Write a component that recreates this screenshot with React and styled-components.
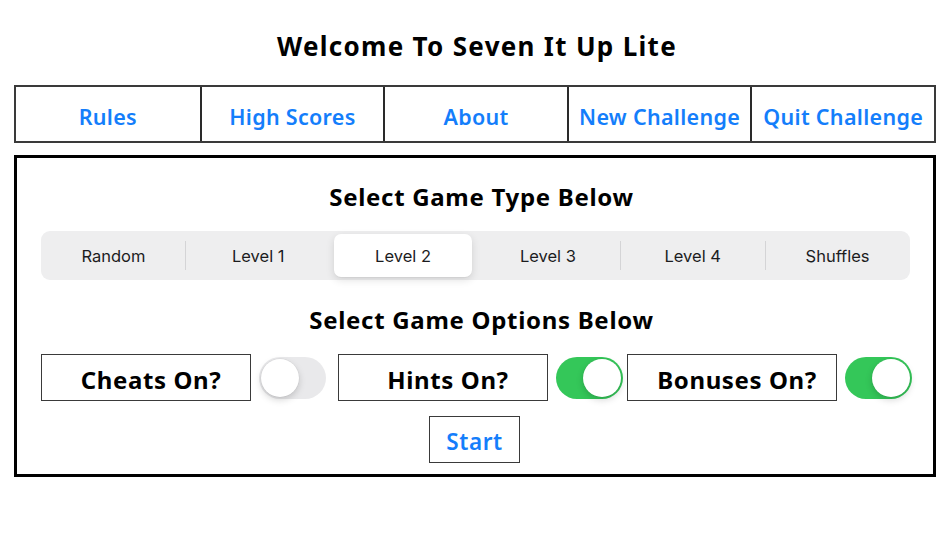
import React, { useState } from "react";
import styled, { createGlobalStyle } from "styled-components";

const Global = createGlobalStyle`
  html, body { margin: 0; padding: 0; background: #ffffff; }
  body { width: 950px; height: 534px; overflow: hidden; font-family: "Noto Sans", "DejaVu Sans", sans-serif; }
  * { box-sizing: border-box; }
`;

const Page = styled.div`
  display: flex;
  flex-direction: column;
  padding: 0 14px;
`;

const Title = styled.h1`
  margin: 31px 0 24px;
  height: 30px;
  line-height: 30px;
  text-align: center;
  font-size: 26px;
  font-weight: 700;
  color: #000;
  letter-spacing: 1.3px;
  padding-left: 4px;
`;

const Nav = styled.div`
  display: grid;
  grid-template-columns: repeat(5, 1fr);
  height: 58px;
  border: 2px solid #3a3a3a;
`;

const NavButton = styled.button`
  display: flex;
  align-items: center;
  justify-content: center;
  border: none;
  border-left: ${(p) => (p.$first ? "none" : "2px solid #2a2a2a")};
  background: #fff;
  color: #147efb;
  font-family: inherit;
  font-size: 21.5px;
  font-weight: 600;
  letter-spacing: 0.3px;
  padding: 4px 0 0;
  white-space: nowrap;
  cursor: pointer;
`;

const Panel = styled.div`
  margin-top: 12px;
  border: 3px solid #000;
  height: 322px;
  display: flex;
  flex-direction: column;
  align-items: stretch;
  padding: 24px 23px 0 24px;
`;

const Heading = styled.h2`
  margin: ${(p) => p.$top}px 0 0;
  height: 30px;
  line-height: 30px;
  text-align: center;
  font-size: 24px;
  font-weight: 700;
  color: #000;
  letter-spacing: 0.7px;
  padding-left: 12px;
`;

const Segmented = styled.div`
  margin-top: 19px;
  height: 49px;
  background: #eeeeef;
  border-radius: 9px;
  padding: 3px 0;
  display: grid;
  grid-template-columns: repeat(6, 1fr);
`;

const Segment = styled.div`
  position: relative;
  display: flex;
  align-items: center;
  justify-content: center;
  font-family: Inter, Roboto, sans-serif;
  font-size: 16.5px;
  color: #1c1c1e;
  border-radius: 7px;
  margin: 0 3.5px;
  background: ${(p) => (p.$active ? "#ffffff" : "transparent")};
  box-shadow: ${(p) =>
    p.$active ? "0 3px 8px rgba(0,0,0,0.12), 0 1px 1px rgba(0,0,0,0.04)" : "none"};
  cursor: pointer;
`;

const Divider = styled.span`
  position: absolute;
  left: -4px;
  top: 7px;
  bottom: 7px;
  width: 1px;
  background: #d4d4d6;
`;

const OptionsRow = styled.div`
  margin-top: 19px;
  height: 47px;
  display: flex;
  align-items: center;
`;

const OptionGroup = styled.div`
  display: flex;
  align-items: center;
  margin-left: ${(p) => p.$offset || 0}px;
`;

const OptionBox = styled.div`
  width: 210px;
  height: 47px;
  border: 1.5px solid #3a3a3a;
  display: flex;
  align-items: center;
  justify-content: center;
  padding: 4px 0 0 10px;
  font-size: 24px;
  font-weight: 700;
  color: #000;
  letter-spacing: 0.6px;
  white-space: nowrap;
`;

const Switch = styled.button`
  margin-left: 8px;
  width: 67px;
  height: 42px;
  border-radius: 21px;
  border: none;
  padding: 2px;
  background: ${(p) => (p.$on ? "#34c759" : "#e9e9eb")};
  display: flex;
  justify-content: ${(p) => (p.$on ? "flex-end" : "flex-start")};
  cursor: pointer;
`;

const Knob = styled.span`
  width: 38px;
  height: 38px;
  border-radius: 50%;
  background: #fff;
  box-shadow: 0 3px 7px rgba(0, 0, 0, 0.17), 0 0 0 0.5px rgba(0, 0, 0, 0.06);
`;

const StartRow = styled.div`
  margin-top: 15px;
  display: flex;
  justify-content: center;
  padding-right: 2px;
`;

const StartButton = styled.button`
  width: 91px;
  height: 47px;
  border: 1.5px solid #3a3a3a;
  background: #fff;
  color: #147efb;
  font-family: inherit;
  font-size: 22.5px;
  font-weight: 600;
  letter-spacing: 0.6px;
  padding: 4px 0 0;
  cursor: pointer;
`;

const navItems = ["Rules", "High Scores", "About", "New Challenge", "Quit Challenge"];
const segments = ["Random", "Level 1", "Level 2", "Level 3", "Level 4", "Shuffles"];

export default function App() {
  const [selected, setSelected] = useState(2);
  const [opts, setOpts] = useState({ cheats: false, hints: true, bonuses: true });
  const options = [
    { key: "cheats", label: "Cheats On?", offset: 0 },
    { key: "hints", label: "Hints On?", offset: 12 },
    { key: "bonuses", label: "Bonuses On?", offset: 4 },
  ];
  return (
    <Page>
      <Global />
      <Title>Welcome To Seven It Up Lite</Title>
      <Nav>
        {navItems.map((n, i) => (
          <NavButton key={n} $first={i === 0}>
            {n}
          </NavButton>
        ))}
      </Nav>
      <Panel>
        <Heading $top={0}>Select Game Type Below</Heading>
        <Segmented>
          {segments.map((s, i) => (
            <Segment key={s} $active={i === selected} onClick={() => setSelected(i)}>
              {i > 0 && i !== selected && i - 1 !== selected && <Divider />}
              {s}
            </Segment>
          ))}
        </Segmented>
        <Heading $top={25}>Select Game Options Below</Heading>
        <OptionsRow>
          {options.map((o) => (
            <OptionGroup key={o.key} $offset={o.offset}>
              <OptionBox>{o.label}</OptionBox>
              <Switch
                $on={opts[o.key]}
                onClick={() => setOpts({ ...opts, [o.key]: !opts[o.key] })}
              >
                <Knob />
              </Switch>
            </OptionGroup>
          ))}
        </OptionsRow>
        <StartRow>
          <StartButton>Start</StartButton>
        </StartRow>
      </Panel>
    </Page>
  );
}
